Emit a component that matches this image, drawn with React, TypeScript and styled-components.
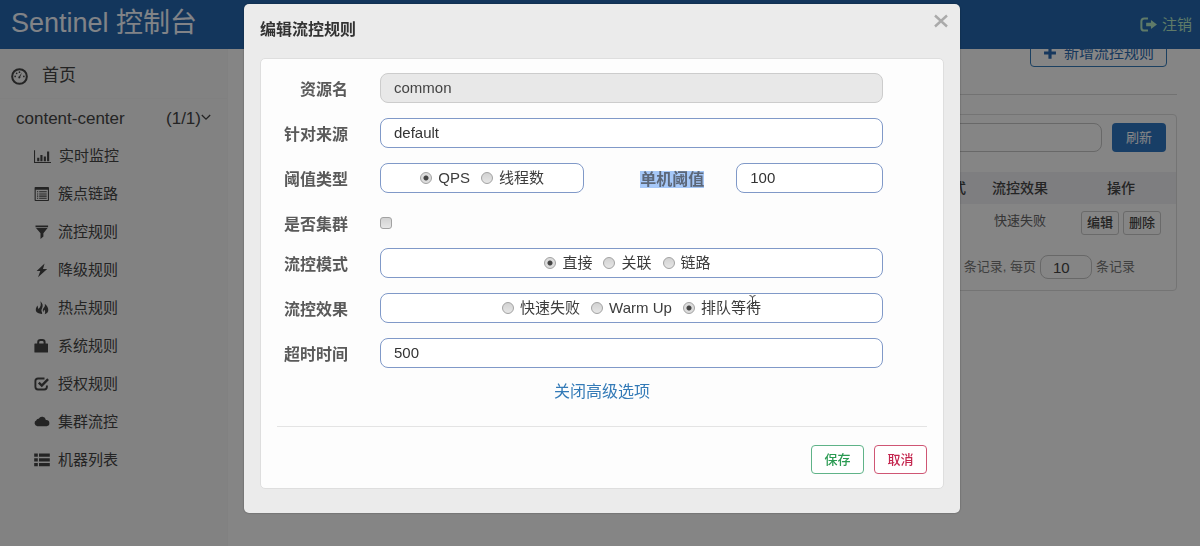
import React from 'react';
import styled, { createGlobalStyle, css } from 'styled-components';

const GlobalStyle = createGlobalStyle`
  *, *::before, *::after { box-sizing: border-box; }
  body {
    margin: 0;
    background: #fbfbfb;
    color: #444;
    font-family: "Liberation Sans", "Noto Sans CJK SC", sans-serif;
    font-size: 15px;
    line-height: 20px;
  }
  button, input { font: inherit; color: inherit; margin: 0; }
  h1, h2, p { margin: 0; }
  a { text-decoration: none; }
`;

/* ---------- page behind the dialog ---------- */

const Page = styled.div`
  display: flex;
  flex-direction: column;
  height: 100vh;
  overflow: hidden;
`;

const TopBar = styled.header`
  flex: none;
  display: flex;
  align-items: center;
  justify-content: space-between;
  height: 49px;
  padding: 0 8px 4px 11px;
  background: #2467ae;
`;

const Brand = styled.h1`
  font-size: 27px;
  font-weight: 400;
  line-height: 40px;
  color: #f4f8ff;
`;

const LogoutLink = styled.a`
  display: flex;
  align-items: center;
  gap: 5px;
  padding-top: 4px;
  color: #b4e6c4;
`;

const Body = styled.div`
  flex: 1;
  display: flex;
  min-height: 0;
`;

const Sidebar = styled.nav`
  flex: none;
  width: 228px;
  background: #f6f6f6;
  border-right: 1px solid #f4f4f4;
`;

const HomeLink = styled.a`
  display: flex;
  align-items: center;
  gap: 14px;
  height: 50px;
  padding: 5px 11px 0;
  border-bottom: 1px solid #f2f2f2;
  font-size: 17px;
  color: #444;
`;

const AppRow = styled.a`
  display: flex;
  align-items: center;
  justify-content: space-between;
  height: 38px;
  padding: 1px 16px 0;
  font-size: 17px;
  color: #444;
`;

const AppCount = styled.span`
  display: flex;
  align-items: center;
`;

const MenuList = styled.ul`
  list-style: none;
  margin: 0;
  padding: 0;
`;

const MenuLink = styled.a`
  display: flex;
  align-items: center;
  gap: 8px;
  height: 38px;
  padding: 0 34px;
  color: #444;
`;

const Main = styled.main`
  flex: 1;
  min-width: 0;
  overflow: hidden;
  padding: 0 23px 0 16px;
`;

const Toolbar = styled.div`
  display: flex;
  align-items: flex-end;
  justify-content: flex-end;
  height: 46px;
  padding: 0 10px 27px;
  border-bottom: 1px solid #d8d8d8;
`;

const AddButton = styled.button`
  flex: none;
  display: flex;
  align-items: center;
  gap: 7px;
  height: 30px;
  padding: 2px 12px 0;
  border: 1px solid #337ab7;
  border-radius: 4px;
  background: transparent;
  color: #2a69b0;
`;

const Card = styled.section`
  margin-top: 19px;
  border: 1px solid #dcdcdc;
  border-radius: 4px;
`;

const CardHead = styled.div`
  display: flex;
  align-items: center;
  gap: 10px;
  height: 57px;
  padding: 0 10px 12px;
`;

const SearchInput = styled.input`
  flex: 1;
  min-width: 0;
  height: 29px;
  border: 1px solid #c4c4c4;
  border-radius: 8px;
  background: transparent;
`;

const RefreshButton = styled.button`
  width: 54px;
  height: 29px;
  padding: 0;
  border: 0;
  border-radius: 4px;
  background: #2f75c0;
  color: #fff;
  font-size: 13px;
`;

const RuleTable = styled.table`
  width: 100%;
  border-collapse: collapse;
  table-layout: fixed;
  font-size: 13px;
  text-align: center;
`;

const HeadCell = styled.th<{ $width?: number }>`
  width: ${p => (p.$width ? `${p.$width}px` : 'auto')};
  height: 32px;
  padding: 0;
  background: #eeeef2;
  font-size: 14px;
  font-weight: 500;
`;

const Cell = styled.td`
  height: 40px;
  padding: 7px 0 0;
  vertical-align: top;
  color: #666;
`;

const RowActions = styled.div`
  display: flex;
  justify-content: center;
  gap: 4px;
`;

const RowButton = styled.button`
  width: 38px;
  height: 24px;
  padding: 0;
  border: 1px solid #c8c8c8;
  border-radius: 3px;
  background: transparent;
  color: #444;
  font-weight: 500;
`;

const Pager = styled.div`
  display: flex;
  align-items: center;
  justify-content: flex-end;
  gap: 4px;
  height: 46px;
  padding: 0 41px 0 0;
  font-size: 13px;
  color: #777;
`;

const PageSize = styled.input`
  width: 52px;
  height: 24px;
  padding: 0 12px;
  border: 1px solid #c4c4c4;
  border-radius: 8px;
  background: transparent;
  color: #444;
  font-size: 15px;
`;

/* ---------- dialog ---------- */

const Backdrop = styled.div`
  position: fixed;
  inset: 0;
  padding: 4px 20% 0 calc(20% + 4px);
  background: rgba(0, 0, 0, 0.47);
`;

const Dialog = styled.section`
  padding: 0 16px 24px;
  border-radius: 5px;
  background: #ebebeb;
  box-shadow: 0 0 2px rgba(0, 0, 0, 0.4);
`;

const DialogHead = styled.div`
  display: flex;
  justify-content: space-between;
  height: 54px;
  padding-top: 9px;
`;

const DialogTitle = styled.h2`
  padding-top: 5px;
  font-size: 16px;
  font-weight: 700;
  line-height: 24px;
  color: #333;
`;

const CloseButton = styled.button`
  display: flex;
  align-items: center;
  justify-content: center;
  width: 18px;
  height: 16px;
  margin-right: -6px;
  padding: 0;
  border: 0;
  background: none;
  color: #aaa;
`;

const Panel = styled.form`
  padding: 14px 16px;
  border: 1px solid #dedede;
  border-radius: 5px;
  background: #fdfdfd;
`;

const Fields = styled.div`
  display: grid;
  gap: 15px;
  padding-right: 44px;
`;

const Row = styled.div<{ $compact?: boolean }>`
  display: grid;
  grid-template-columns: 71px minmax(0, 1fr);
  column-gap: 32px;
  align-items: center;
  height: ${p => (p.$compact ? 25 : 30)}px;
  padding-top: ${p => (p.$compact ? 3 : 0)}px;
`;

const labelText = css`
  padding-top: 4px;
  text-align: right;
  font-size: 16px;
  font-weight: 700;
  line-height: 20px;
  color: #5a5a5a;
`;

const FieldLabel = styled.label`${labelText}`;
const GroupLabel = styled.span`${labelText}`;

const Marked = styled.span`
  background: #a6c8f8;
  color: #5c6778;
`;

const fieldBox = css`
  width: 100%;
  height: 30px;
  border: 1px solid #8099c8;
  border-radius: 8px;
  background: #fff;
`;

const TextField = styled.input`
  ${fieldBox}
  padding: 0 13px 2px;
  color: #333;
  outline: none;

  &:disabled {
    border-color: #ccc;
    background: #e8e8e8;
    color: #444;
  }
`;

const RadioGroup = styled.div<{ $inset?: number }>`
  ${fieldBox}
  display: flex;
  align-items: center;
  justify-content: center;
  gap: 11px;
  padding-right: ${p => p.$inset ?? 0}px;
`;

const Option = styled.label`
  position: relative;
  display: flex;
  align-items: center;
  gap: 6px;
  color: #3c3c3c;
`;

const tick = css`
  appearance: none;
  flex: none;
  width: 12px;
  height: 12px;
  border: 1px solid #a2a2a2;
  background: linear-gradient(#d2d2d2, #e6e6e6);
`;

const Radio = styled.input.attrs({ type: 'radio' })`
  ${tick}
  border-radius: 50%;

  &:checked {
    background: radial-gradient(circle, #444 0 2px, #dcdcdc 3px);
  }
`;

const Checkbox = styled.input.attrs({ type: 'checkbox' })`
  ${tick}
  display: block;
  border-radius: 3px;
`;

const ThresholdFields = styled.div`
  display: grid;
  grid-template-columns: minmax(0, 8fr) 120px minmax(0, 7fr);
  align-items: center;
`;

const CountField = styled.div`
  padding-left: 32px;
`;

const AdvancedLink = styled.a`
  display: block;
  width: fit-content;
  margin: 13px auto 0;
  font-size: 16px;
  line-height: 22px;
  color: #337ab7;
`;

const DialogFoot = styled.div`
  display: flex;
  justify-content: flex-end;
  gap: 10px;
  margin-top: 23px;
  padding-top: 18px;
  border-top: 1px solid #e4e4e4;
`;

const ActionButton = styled.button<{ $color: string; $border: string }>`
  width: 53px;
  height: 29px;
  padding: 1px 0 0;
  border: 1px solid ${p => p.$border};
  border-radius: 4px;
  background: #fff;
  color: ${p => p.$color};
  font-size: 13px;
  font-weight: 500;
`;

const TextCursor = styled.svg`
  position: absolute;
  right: 4px;
  top: -4px;
`;

/* ---------- icons ---------- */

const Icon = ({ size = 16, children }: { size?: number; children: React.ReactNode }) => (
  <svg width={size} height={size} viewBox="0 0 16 16" fill="currentColor" aria-hidden="true">
    {children}
  </svg>
);

const DashboardIcon = () => (
  <Icon size={17}>
    <circle cx="8" cy="8" r="6.9" fill="none" stroke="currentColor" strokeWidth="1.9" />
    <circle cx="3.9" cy="7.9" r="0.8" />
    <circle cx="5.3" cy="5" r="0.8" />
    <circle cx="8" cy="3.9" r="0.8" />
    <circle cx="12.1" cy="7.9" r="0.8" />
    <path d="M10.4 4.2 8.700 8.300a1 1 0 1 1-1-.5z" />
  </Icon>
);

const StatsIcon = () => (
  <Icon size={17}>
    <path d="M0 2h1v11.200h15v1H0zM3 9.200h2v3.300H3zM6 6.500h2v6H6zM9.200 8h2v4.500h-2zM12.300 3.300h2v9.200h-2z" />
  </Icon>
);

const ListAltIcon = () => (
  <Icon>
    <path fillRule="evenodd" d="M1.400 1h12.800q.8 0 .8.800v12.400q0 .8-.8.800H1.400q-.8 0-.8-.8V1.800q0-.8.8-.8zM1.700 3.700v10.200h12.200V3.700z" />
    <path d="M3 5.200h1.200v1.100H3zM5.200 5.200h7.500v1.100H5.200zM3 7.400h1.200v1.100H3zM5.200 7.400h7.500v1.100H5.200zM3 9.600h1.200v1.100H3zM5.200 9.600h7.500v1.100H5.200zM3 11.700h1.200v1.100H3zM5.200 11.700h7.500v1.100H5.200z" />
  </Icon>
);

const FilterIcon = () => (
  <Icon>
    <path d="M1.500 1.500h12.600v1.700H1.500zM2 4h11.600L9.400 9.200v3.300L6.500 15V9.200z" />
  </Icon>
);

const FlashIcon = () => (
  <Icon>
    <path d="M10.600 1.500 2.600 9h3.700l-2.300 6.200L13.200 7H9z" />
  </Icon>
);

const FireIcon = () => (
  <Icon>
    <path d="M6.400 1.200c2.400 2.200 2.800 4.500 1.800 6.700-.5 1.200-1.200 2.200-.4 4.100.3.700.4 1.400.3 1.900C5.300 14 1.500 12.800 1.800 9.300c.1-1.600 1.100-2.700 1.700-3.800.5 1.500.4 2.600 1 3.400C6.900 6.600 7.200 4.300 6.400 1.200z" />
    <path d="M10.700 3.700c2 1.500 3.700 3.800 3.600 6.300-.1 2.300-1.300 3.600-3.600 4.200.8-2.100.5-3.500-.5-4.500-.5.900-.6 1.400-.6 2.500-1.200-1.500-1.100-3 .4-4.700.9-1.100 1.200-2.300.7-3.800z" />
  </Icon>
);

const LockIcon = () => (
  <Icon>
    <path fillRule="evenodd" d="M3.200 5.500V4.200Q3.200 1 6.500 1h1.800Q11.600 1 11.600 4.200V5.500h1.800q.6 0 .6.600v7.900q0 .6-.6.600H1q-.6 0-.6-.6V6.100Q.4 5.500 1 5.500zM5.200 5.500h4.400V4.300Q9.600 2.900 8.200 2.900H6.600Q5.200 2.900 5.200 4.300z" />
  </Icon>
);

const CheckIcon = () => (
  <Icon>
    <path d="M10.500 2.500H4Q1.400 2.500 1.400 5v5.800q0 2.700 2.600 2.700h6.200q2.700 0 2.700-2.700V9.600" fill="none" stroke="currentColor" strokeWidth="1.900" />
    <path d="m4.800 6.600 3 2.900 6.300-6.300" fill="none" stroke="currentColor" strokeWidth="2.400" />
  </Icon>
);

const CloudIcon = () => (
  <Icon>
    <path d="M3.300 12.200A3.100 3.100 0 0 1 2.400 6.300 2 2 0 0 1 4.700 4.700a3.900 3.900 0 0 1 7.200 1.300 3.100 3.100 0 1 1 .7 6.200z" />
  </Icon>
);

const ThListIcon = () => (
  <Icon>
    <path d="M.2 1.500h3.600v3.200H.2zM5 1.500h10.800v3.200H5zM.2 6.300h3.600v3.200H.2zM5 6.300h10.800v3.200H5zM.2 11.100h3.600v3.200H.2zM5 11.100h10.800v3.200H5z" />
  </Icon>
);

const LogoutIcon = () => (
  <Icon size={17}>
    <path d="M7.500 2.300H4Q1.300 2.300 1.300 5v6q0 2.700 2.700 2.700h3.500" fill="none" stroke="currentColor" strokeWidth="1.900" />
    <path d="M10.300 3.700 16 8l-5.700 4.300V9.600H5.800V6.400h4.500z" />
  </Icon>
);

const PlusIcon = () => (
  <Icon size={14}>
    <path d="M6.200 1.500h3.600v4.700h5v3.600h-5v4.700H6.200V9.800h-5V6.200h5z" />
  </Icon>
);

const ChevronIcon = () => (
  <svg width="10" height="14" viewBox="0 0 10 14" fill="none" stroke="currentColor" aria-hidden="true">
    <path d="m.8 3 4.200 4.200L9.200 3" strokeWidth="1.300" />
  </svg>
);

/* ---------- data ---------- */

const menu: [string, React.FC][] = [
  ['实时监控', StatsIcon],
  ['簇点链路', ListAltIcon],
  ['流控规则', FilterIcon],
  ['降级规则', FlashIcon],
  ['热点规则', FireIcon],
  ['系统规则', LockIcon],
  ['授权规则', CheckIcon],
  ['集群流控', CloudIcon],
  ['机器列表', ThListIcon],
];

interface ChoiceProps {
  name: string;
  labelId: string;
  options: string[];
  selected: string;
  cursorOn?: string;
  inset?: number;
}

const Choice = ({ name, labelId, options, selected, cursorOn, inset }: ChoiceProps) => (
  <RadioGroup role="radiogroup" aria-labelledby={labelId} $inset={inset}>
    {options.map(text => (
      <Option key={text}>
        <Radio name={name} value={text} defaultChecked={text === selected} />
        {text}
        {text === cursorOn && (
          <TextCursor width="9" height="16" viewBox="0 0 9 16" fill="none" stroke="#444" aria-hidden="true">
            <path d="M1.500 1.500q3 0 3 2.500 0-2.500 3-2.500M4.500 4v8M1.500 14.500q3 0 3-2.500 0 2.500 3 2.500M3 9.500h3" />
          </TextCursor>
        )}
      </Option>
    ))}
  </RadioGroup>
);

export default function App() {
  return (
    <>
      <GlobalStyle />
      <Page>
        <TopBar>
          <Brand>Sentinel 控制台</Brand>
          <LogoutLink href="#logout"><LogoutIcon />注销</LogoutLink>
        </TopBar>
        <Body>
          <Sidebar>
            <HomeLink href="#home"><DashboardIcon />首页</HomeLink>
            <AppRow href="#content-center">
              content-center
              <AppCount>(1/1)<ChevronIcon /></AppCount>
            </AppRow>
            <MenuList>
              {menu.map(([text, Glyph]) => (
                <li key={text}>
                  <MenuLink href={`#${text}`}><Glyph />{text}</MenuLink>
                </li>
              ))}
            </MenuList>
          </Sidebar>
          <Main>
            <Toolbar>
              <AddButton type="button"><PlusIcon />新增流控规则</AddButton>
            </Toolbar>
            <Card>
              <CardHead>
                <SearchInput type="text" aria-label="搜索" />
                <RefreshButton type="button">刷新</RefreshButton>
              </CardHead>
              <RuleTable>
                <thead>
                  <tr>
                    <HeadCell />
                    <HeadCell $width={72}>流控模式</HeadCell>
                    <HeadCell $width={92}>流控效果</HeadCell>
                    <HeadCell $width={110}>操作</HeadCell>
                  </tr>
                </thead>
                <tbody>
                  <tr>
                    <Cell />
                    <Cell />
                    <Cell>快速失败</Cell>
                    <Cell>
                      <RowActions>
                        <RowButton type="button">编辑</RowButton>
                        <RowButton type="button">删除</RowButton>
                      </RowActions>
                    </Cell>
                  </tr>
                </tbody>
              </RuleTable>
              <Pager>
                <label htmlFor="page-size">条记录, 每页</label>
                <PageSize id="page-size" type="text" defaultValue="10" />
                <span>条记录</span>
              </Pager>
            </Card>
          </Main>
        </Body>
      </Page>

      <Backdrop>
        <Dialog role="dialog" aria-modal="true" aria-labelledby="dialog-title">
          <DialogHead>
            <DialogTitle id="dialog-title">编辑流控规则</DialogTitle>
            <CloseButton type="button" aria-label="关闭">
              <svg width="14" height="14" viewBox="0 0 14 14" stroke="currentColor" strokeWidth="2.400" aria-hidden="true">
                <path d="m1 1.500 12 11M13 1.500 1 12.500" />
              </svg>
            </CloseButton>
          </DialogHead>
          <Panel onSubmit={e => e.preventDefault()}>
            <Fields>
              <Row>
                <FieldLabel htmlFor="resource">资源名</FieldLabel>
                <TextField id="resource" type="text" defaultValue="common" disabled />
              </Row>
              <Row>
                <FieldLabel htmlFor="limit-app">针对来源</FieldLabel>
                <TextField id="limit-app" type="text" defaultValue="default" />
              </Row>
              <Row>
                <GroupLabel id="grade">阈值类型</GroupLabel>
                <ThresholdFields>
                  <Choice name="grade" labelId="grade" options={['QPS', '线程数']} selected="QPS" />
                  <FieldLabel htmlFor="count"><Marked>单机阈值</Marked></FieldLabel>
                  <CountField>
                    <TextField id="count" type="text" defaultValue="100" />
                  </CountField>
                </ThresholdFields>
              </Row>
              <Row $compact>
                <FieldLabel htmlFor="cluster">是否集群</FieldLabel>
                <Checkbox id="cluster" />
              </Row>
              <Row>
                <GroupLabel id="strategy">流控模式</GroupLabel>
                <Choice
                  name="strategy"
                  labelId="strategy"
                  options={['直接', '关联', '链路']}
                  selected="直接"
                  inset={8}
                />
              </Row>
              <Row>
                <GroupLabel id="behavior">流控效果</GroupLabel>
                <Choice
                  name="behavior"
                  labelId="behavior"
                  options={['快速失败', 'Warm Up', '排队等待']}
                  selected="排队等待"
                  cursorOn="排队等待"
                />
              </Row>
              <Row>
                <FieldLabel htmlFor="timeout">超时时间</FieldLabel>
                <TextField id="timeout" type="text" defaultValue="500" />
              </Row>
            </Fields>
            <AdvancedLink href="#advanced">关闭高级选项</AdvancedLink>
            <DialogFoot>
              <ActionButton type="submit" $color="#2a9a52" $border="#5fb388">保存</ActionButton>
              <ActionButton type="button" $color="#c4274f" $border="#cf5674">取消</ActionButton>
            </DialogFoot>
          </Panel>
        </Dialog>
      </Backdrop>
    </>
  );
}
